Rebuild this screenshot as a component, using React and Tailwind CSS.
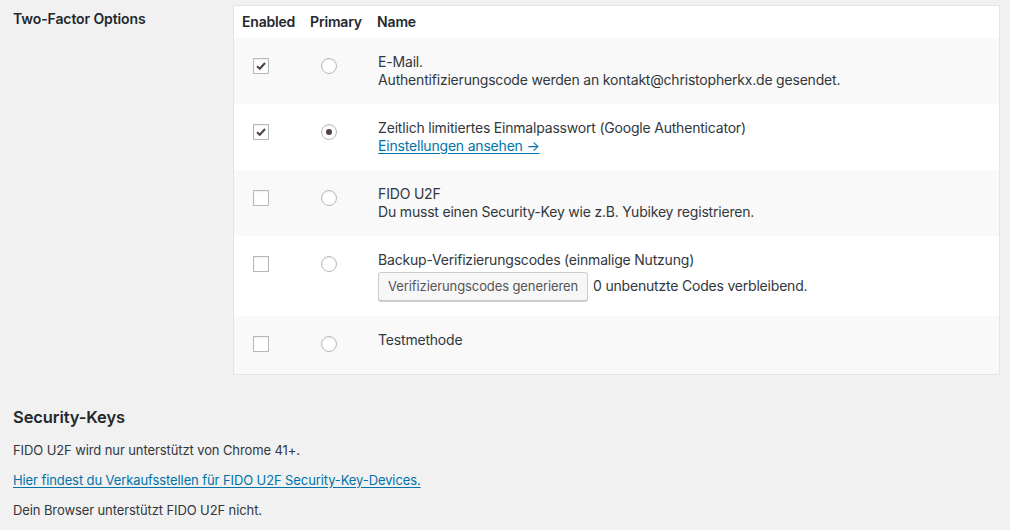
import { useState } from 'react'

const font = { fontFamily: 'Inter, "Liberation Sans", sans-serif' }

function Checkbox({ checked }) {
  return (
    <span className="flex h-4 w-4 items-center justify-center border border-[#b4b9be] bg-white shadow-[inset_0_1px_2px_rgba(0,0,0,0.07)]">
      {checked && (
        <svg viewBox="0 0 16 16" className="h-[14px] w-[14px]">
          <path d="M3.5 8.2 6.6 11.2 12.6 4.6" fill="none" stroke="#50424c" strokeWidth="2.4" />
        </svg>
      )}
    </span>
  )
}

function Radio({ checked }) {
  return (
    <span className="flex h-4 w-4 items-center justify-center rounded-full border border-[#b4b9be] bg-white shadow-[inset_0_1px_2px_rgba(0,0,0,0.07)]">
      {checked && <span className="h-[6px] w-[6px] rounded-full bg-[#50424c]" />}
    </span>
  )
}

const providers = [
  {
    id: 'email',
    enabled: true,
    name: 'E-Mail.',
    extra: <div>Authentifizierungscode werden an kontakt@christopherkx.de gesendet.</div>,
  },
  {
    id: 'totp',
    enabled: true,
    primary: true,
    name: 'Zeitlich limitiertes Einmalpasswort (Google Authenticator)',
    extra: (
      <a href="#" className="text-[#0073aa] underline underline-offset-2">
        Einstellungen ansehen →
      </a>
    ),
  },
  {
    id: 'u2f',
    name: 'FIDO U2F',
    extra: <div>Du musst einen Security-Key wie z.B. Yubikey registrieren.</div>,
  },
  {
    id: 'backup',
    name: 'Backup-Verifizierungscodes (einmalige Nutzung)',
    extra: (
      <div className="mt-[3px] flex items-center">
        <button className="h-[29px] rounded-[3px] border border-[#cccccc] bg-[#f7f7f7] px-[9px] text-[13px] tracking-[-0.1px] text-[#555555] shadow-[0_1px_0_#cccccc]">
          Verifizierungscodes generieren
        </button>
        <span className="ml-[5px]">0 unbenutzte Codes verbleibend.</span>
      </div>
    ),
  },
  { id: 'test', name: 'Testmethode' },
]

export default function App() {
  const [rows] = useState(providers)

  return (
    <div className="min-h-[530px] bg-[#f1f1f1] text-[#32373c]" style={font}>
      <div className="flex pl-[13px] pr-[10px] pt-[5px]">
        <div className="w-[220px] pt-[5px] text-[14px] font-semibold leading-[18px] tracking-[-0.1px] text-[#23282d]">
          Two-Factor Options
        </div>
        <table className="flex-1 table-fixed border-collapse border border-[#e5e5e5] bg-white text-[14px] leading-[18px] tracking-[-0.2px]">
          <thead>
            <tr className="h-[32px] text-left text-[#23282d]">
              <th className="w-[68px] px-2 font-semibold">Enabled</th>
              <th className="w-[68px] px-[7px] font-semibold">Primary</th>
              <th className="pl-[6px] font-semibold">Name</th>
            </tr>
          </thead>
          <tbody>
            {rows.map((p, i) => (
              <tr key={p.id} className={i % 2 === 0 ? 'bg-[#f9f9f9]' : 'bg-white'}>
                <td className="py-[15px] pl-[19px] align-top">
                  <div className="flex h-[28px] items-start pt-[5px]">
                    <Checkbox checked={p.enabled} />
                  </div>
                </td>
                <td className="py-[15px] pl-[18px] align-top">
                  <div className="flex pt-[5px]">
                    <Radio checked={p.primary} />
                  </div>
                </td>
                <td className="py-[15px] pl-[7px] align-top">
                  <div>{p.name}</div>
                  {p.extra}
                </td>
              </tr>
            ))}
          </tbody>
        </table>
      </div>

      <div className="px-[13px] pb-[10px]">
        <h2 className="mt-[30px] text-[16.5px] font-semibold leading-[24px] tracking-[-0.1px] text-[#23282d]">Security-Keys</h2>
        <p className="mt-[11px] text-[13px] leading-[20px] tracking-[-0.1px]">FIDO U2F wird nur unterstützt von Chrome 41+.</p>
        <p className="mt-[10px] text-[13px] leading-[20px] tracking-[-0.1px]">
          <a href="#" className="text-[#0073aa] underline underline-offset-2">
            Hier findest du Verkaufsstellen für FIDO U2F Security-Key-Devices.
          </a>
        </p>
        <p className="mt-[10px] text-[13px] leading-[20px] tracking-[-0.1px]">Dein Browser unterstützt FIDO U2F nicht.</p>
      </div>
    </div>
  )
}
